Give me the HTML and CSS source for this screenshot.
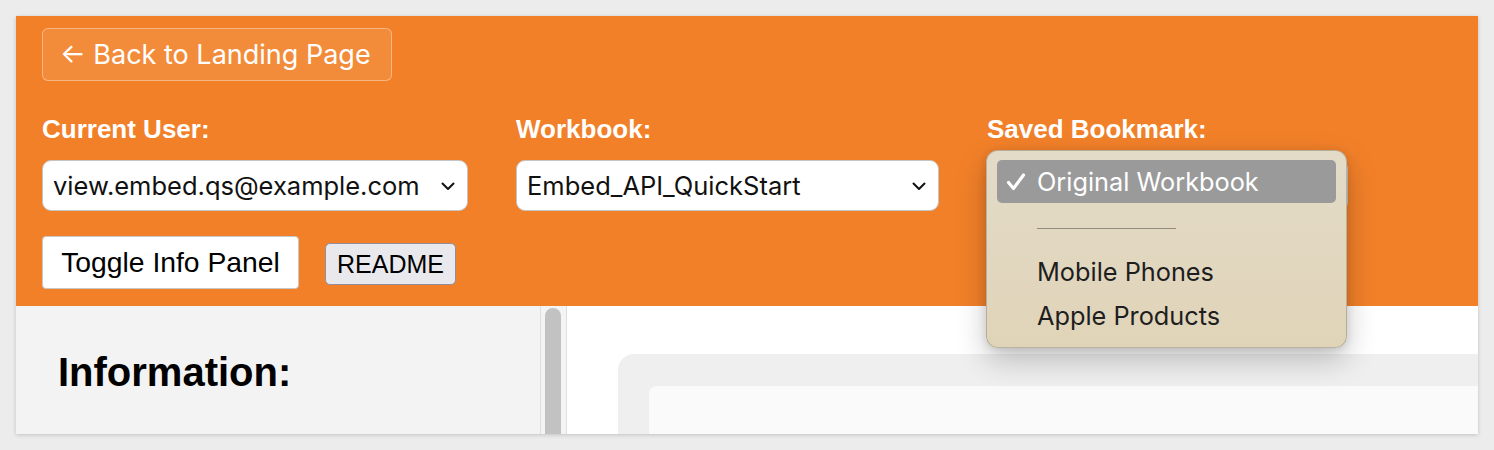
FILE: index.html
```html
<!DOCTYPE html>
<html lang="en">
<head>
<meta charset="utf-8">
<title>Embed Demo</title>
<link rel="stylesheet" href="styles.css">
</head>
<body>
<div class="frame">
  <header class="header">
    <button class="back-btn">← Back to Landing Page</button>
    <div class="controls">
      <div class="field">
        <label class="label">Current User:</label>
        <div class="select-wrap">
          <select class="select"><option>view.embed.qs@example.com</option></select>
          <svg class="chev" width="14" height="9" viewBox="0 0 14 9"><path d="M1.5 1.5 L7 7 L12.5 1.5" fill="none" stroke="#111" stroke-width="2" stroke-linecap="round" stroke-linejoin="round"/></svg>
        </div>
      </div>
      <div class="field">
        <label class="label">Workbook:</label>
        <div class="select-wrap">
          <select class="select"><option>Embed_API_QuickStart</option></select>
          <svg class="chev" width="14" height="9" viewBox="0 0 14 9"><path d="M1.5 1.5 L7 7 L12.5 1.5" fill="none" stroke="#111" stroke-width="2" stroke-linecap="round" stroke-linejoin="round"/></svg>
        </div>
      </div>
      <div class="field">
        <label class="label">Saved Bookmark:</label>
        <div class="select-wrap">
          <select class="select"><option>Original Workbook</option></select>
        </div>
      </div>
    </div>
    <div class="actions">
      <button class="toggle-btn">Toggle Info Panel</button>
      <button class="readme-btn">README</button>
    </div>
  </header>
  <main class="body">
    <aside class="info">
      <h2 class="info-title">Information:</h2>
    </aside>
    <div class="divider"><div class="thumb"></div></div>
    <section class="content">
      <div class="card"><div class="card-inner"></div></div>
    </section>
  </main>
  <div class="popup">
    <div class="opt selected">
      <svg class="check" width="20" height="18" viewBox="0 0 20 18"><path d="M2.5 9.5 L7.5 15.5 L17.5 2" fill="none" stroke="#fff" stroke-width="3.2" stroke-linecap="round" stroke-linejoin="round"/></svg>
      <span>Original Workbook</span>
    </div>
    <div class="sep"></div>
    <div class="opt">Mobile Phones</div>
    <div class="opt">Apple Products</div>
  </div>
</div>
</body>
</html>
```

FILE: styles.css
```css
* { box-sizing: border-box; }
html, body { margin: 0; }
body {
  background: #ececec;
  padding: 16px;
  font-family: "Liberation Sans", Arial, sans-serif;
}
.frame {
  position: relative;
  width: 1462px;
  height: 418px;
  overflow: hidden;
  box-shadow: 0 1px 4px rgba(0,0,0,0.18);
  background: #fff;
  display: flex;
  flex-direction: column;
}
.header {
  background: #f28029;
  height: 290px;
  padding: 12px 26px 0;
  display: flex;
  flex-direction: column;
  flex-shrink: 0;
}
.back-btn {
  align-self: flex-start;
  width: 350px;
  height: 53px;
  background: #f38c3a;
  border: 1.5px solid rgba(255,255,255,0.38);
  border-radius: 6px;
  color: #fff;
  font-family: Inter, "Noto Sans", sans-serif;
  font-size: 27px;
  padding: 0 0 0 17px;
  text-align: left;
}
.controls {
  display: grid;
  grid-template-columns: 426px 423px 361px;
  column-gap: 48px;
  margin-top: 33px;
}
.field { display: flex; flex-direction: column; }
.label {
  color: #fff;
  font-weight: bold;
  font-size: 26px;
  line-height: 30px;
  height: 30px;
}
.select-wrap {
  position: relative;
  margin-top: 16px;
}
.select {
  appearance: none;
  -webkit-appearance: none;
  width: 100%;
  height: 51px;
  background: #fff;
  border: 1.5px solid #c4c4c4;
  border-radius: 9px;
  padding: 0 0 0 10px;
  font-family: Inter, "Noto Sans", sans-serif;
  font-size: 25.5px;
  color: #111;
}
.chev {
  position: absolute;
  right: 13px;
  top: 22px;
}
.actions {
  display: flex;
  align-items: center;
  gap: 26px;
  margin-top: 25px;
}
.toggle-btn {
  width: 257px;
  height: 53px;
  background: #fff;
  border: 1.5px solid #c8c8c8;
  border-radius: 4px;
  font-family: "Liberation Sans", Arial, sans-serif;
  font-size: 28.3px;
  color: #000;
  padding: 0;
}
.readme-btn {
  width: 131px;
  height: 42px;
  margin-top: 3px;
  background: #e9e9ed;
  border: 1.5px solid #8f8f9d;
  border-radius: 5px;
  font-family: "Liberation Sans", Arial, sans-serif;
  font-size: 25px;
  color: #000;
  padding: 0;
}
.body {
  flex: 1;
  display: flex;
  min-height: 0;
}
.info {
  width: 524px;
  background: #f3f3f3;
  padding: 43px 0 0 42px;
}
.info-title {
  margin: 0;
  font-size: 40px;
  line-height: 46px;
  font-weight: bold;
  color: #000;
}
.divider {
  width: 27px;
  background: #f4f4f4;
  border-left: 1px solid #dedede;
  border-right: 1px solid #dedede;
  padding: 2px 0 0 4px;
}
.thumb {
  width: 16px;
  height: 200px;
  background: #c2c2c2;
  border-radius: 8px;
}
.content {
  flex: 1;
  background: #fff;
  padding: 48px 0 0 51px;
}
.card {
  background: #efefef;
  border-radius: 16px 0 0 0;
  height: 200px;
  padding: 32px 0 0 31px;
}
.card-inner {
  background: #fafafa;
  border-radius: 8px 0 0 0;
  height: 200px;
}
.popup {
  position: absolute;
  left: 970px;
  top: 134px;
  width: 361px;
  height: 198px;
  background: linear-gradient(#e3dbc8, #e0d4b8);
  border: 1px solid rgba(0,0,0,0.18);
  border-radius: 12px;
  box-shadow: 0 12px 30px rgba(0,0,0,0.22), 0 2px 8px rgba(0,0,0,0.12);
  padding: 9px 10px 0;
  font-family: Inter, "Noto Sans", sans-serif;
  font-size: 25.3px;
  color: #1e1e1e;
}
.opt {
  height: 44px;
  display: flex;
  align-items: center;
  padding-left: 40px;
}
.opt.selected {
  height: 43px;
  background: #9a9a9a;
  border-radius: 5px;
  color: #fff;
  padding-left: 9px;
  gap: 11px;
}
.sep {
  height: 1px;
  background: #928b7d;
  width: 139px;
  margin: 25px 0 20px 40px;
}
```
